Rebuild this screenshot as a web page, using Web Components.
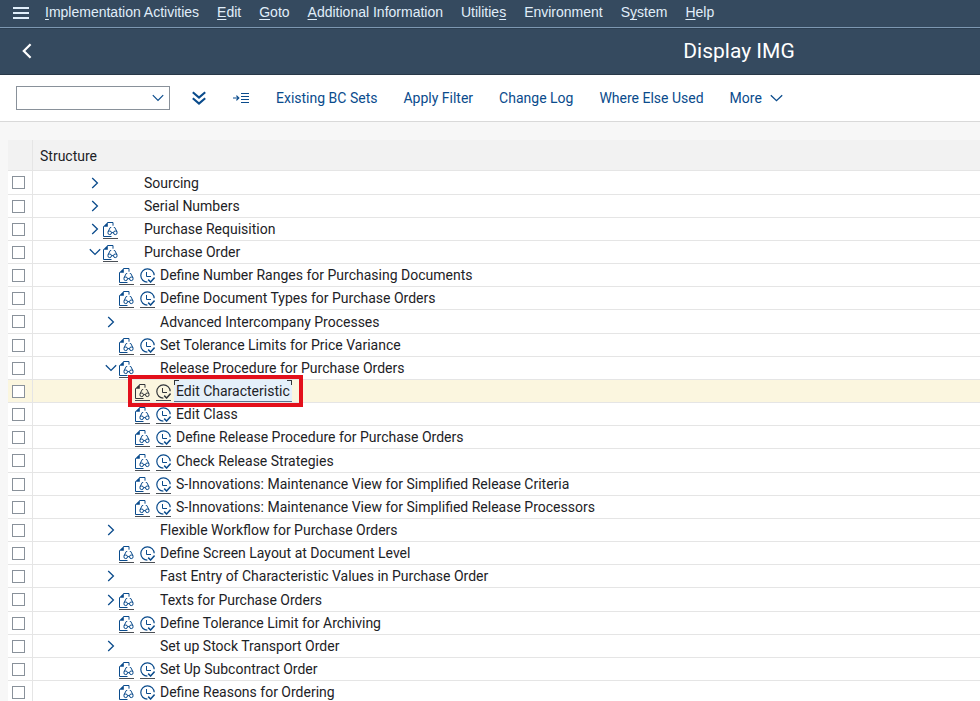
<!DOCTYPE html>
<html lang="en">
<head>
<meta charset="utf-8">
<meta name="viewport" content="width=device-width, initial-scale=1">
<title>Display IMG</title>
<style>
  body {
    margin: 0;
    height: 100vh;
    display: flex;
    flex-direction: column;
    overflow: hidden;
    background: #f7f7f7;
    color: #32363a;
    font: 14px/16px Roboto, "Liberation Sans", Arial, sans-serif;
    --shell: #354a5f;
    --link: #0a4b8c;
  }
</style>
</head>
<body>
  <menu-bar>
    <menu-entry><u>I</u>mplementation Activities</menu-entry>
    <menu-entry><u>E</u>dit</menu-entry>
    <menu-entry><u>G</u>oto</menu-entry>
    <menu-entry><u>A</u>dditional Information</menu-entry>
    <menu-entry>Utilitie<u>s</u></menu-entry>
    <menu-entry>Environment</menu-entry>
    <menu-entry>S<u>y</u>stem</menu-entry>
    <menu-entry><u>H</u>elp</menu-entry>
  </menu-bar>
  <title-bar>Display IMG</title-bar>
  <tool-bar>
    <tool-button label="Expand all"><app-icon name="expand-all"></app-icon></tool-button>
    <tool-button label="Position"><app-icon name="position"></app-icon></tool-button>
    <tool-button>Existing BC Sets</tool-button>
    <tool-button>Apply Filter</tool-button>
    <tool-button>Change Log</tool-button>
    <tool-button>Where Else Used</tool-button>
    <tool-button>More <app-icon name="more"></app-icon></tool-button>
  </tool-bar>
  <img-tree></img-tree>

<script>
const ICONS = {
  menu: [16, 12, `<path d="M0 1h16M0 6h16M0 11h16" stroke-width="2"/>`],
  back: [10, 16, `<path d="M8.6 1.2L1.8 8l6.8 6.8" stroke-width="2.2"/>`],
  down: [12, 8, `<path d="M.8 1.2L6 6.4l5.2-5.2" stroke-width="1.2"/>`],
  more: [13, 8, `<path d="M.8 1.2l5.7 5.4 5.7-5.4" stroke-width="1.3"/>`],
  "expand-all": [14, 14, `<path d="M.8 1.2L7 6.6l6.2-5.4M.8 7.2L7 12.6l6.2-5.4" stroke-width="2.1"/>`],
  position: [16, 12, `<path d="M0 6h5.6M3.4 3.6L5.8 6 3.4 8.4M8 1.5h8M8 4.5h8M8 7.5h8M8 10.5h8" stroke-width="1.2"/>`],
  closed: [8, 12, `<path d="M1.2 1l5.2 5-5.2 5" stroke-width="1.3"/>`],
  open: [12, 8, `<path d="M.8 1.2L6 6.4l5.2-5.2" stroke-width="1.3"/>`],
  doc: [15, 15, `
    <path d="M.5 4.5V14.5h8M4.5.5h5.5v3.2" stroke-width="1"/>
    <path d="M0 4.8L4.8 0v4.8z" fill="currentColor" stroke="none"/>
    <path d="M5 9.8l2.2-4.3h1M14 9.8l-2.2-4.3h-1M8.6 10.6h1.8" stroke-width="1"/>
    <circle cx="6.7" cy="10.8" r="1.8" stroke-width="1"/>
    <circle cx="12.3" cy="10.8" r="1.8" stroke-width="1"/>`],
  activity: [15, 15, `
    <path d="M14.2 7.2A6.7 6.7 0 1 0 7.4 14.2" stroke-width="1.2"/>
    <path d="M6.5 4v4.5h4.5" stroke-width="1"/>
    <path d="M8.2 11.6l2.4 2.4 4-4.4" stroke-width="1.5"/>`]
};

class AppIcon extends HTMLElement {
  constructor() {
    super();
    this.attachShadow({ mode: "open" });
  }

  connectedCallback() {
    const [w, h, shapes] = ICONS[this.getAttribute("name")];
    this.shadowRoot.innerHTML = `
      <style>
        :host { display: block; }
        svg { display: block; }
      </style>
      <svg width="${w}" height="${h}" viewBox="0 0 ${w} ${h}" fill="none"
        stroke="currentColor" aria-hidden="true">${shapes}</svg>
    `;
  }
}

class MenuBar extends HTMLElement {
  constructor() {
    super();
    this.attachShadow({ mode: "open" });
  }

  connectedCallback() {
    this.shadowRoot.innerHTML = `
      <style>
        :host {
          display: block;
          flex: none;
          background: var(--shell);
          border-bottom: 1px solid #7d97b1;
          color: #e0eefa;
          font-family: "Liberation Sans", Arial, sans-serif;
        }
        nav {
          display: flex;
          align-items: center;
          gap: 18px;
          height: 27px;
          box-sizing: border-box;
          padding: 0 13px 3px;
        }
        .menu {
          margin-right: -2px;
          padding: 1px 0 0;
          border: 0;
          background: none;
          color: inherit;
        }
      </style>
      <nav aria-label="Menu">
        <button class="menu" aria-label="Open menu"><app-icon name="menu"></app-icon></button>
        <slot></slot>
      </nav>
    `;
  }
}

class MenuEntry extends HTMLElement {
  constructor() {
    super();
    this.attachShadow({ mode: "open" });
  }

  connectedCallback() {
    this.shadowRoot.innerHTML = `
      <style>
        :host { display: block; }
        button {
          display: block;
          padding: 0;
          border: 0;
          background: none;
          color: inherit;
          font: inherit;
          white-space: nowrap;
        }
        ::slotted(u) {
          text-underline-offset: 2px;
          text-decoration-skip-ink: none;
        }
      </style>
      <button><slot></slot></button>
    `;
  }
}

class TitleBar extends HTMLElement {
  constructor() {
    super();
    this.attachShadow({ mode: "open" });
  }

  connectedCallback() {
    this.shadowRoot.innerHTML = `
      <style>
        :host {
          display: grid;
          grid-template-columns: 1fr 1fr;
          align-items: center;
          flex: none;
          height: 47px;
          box-sizing: border-box;
          padding: 0 2px 2px 22px;
          border-top: 1px solid #2c3f52;
          border-bottom: 1px solid #283848;
          background: var(--shell);
          color: #fff;
        }
        button {
          justify-self: start;
          padding: 0;
          border: 0;
          background: none;
          color: inherit;
        }
        h1 {
          margin: 0;
          font-size: 21px;
          line-height: 24px;
          font-weight: normal;
          text-align: center;
        }
      </style>
      <button aria-label="Back"><app-icon name="back"></app-icon></button>
      <h1><slot></slot></h1>
    `;
  }
}

class ToolBar extends HTMLElement {
  constructor() {
    super();
    this.attachShadow({ mode: "open" });
  }

  connectedCallback() {
    this.shadowRoot.innerHTML = `
      <style>
        :host {
          display: flex;
          align-items: center;
          flex: none;
          height: 47px;
          box-sizing: border-box;
          padding: 0 16px 1px;
          border-bottom: 1px solid #d9d9d9;
          background: #fff;
          color: var(--link);
        }
        .field {
          display: grid;
          align-items: center;
          margin-right: 9px;
        }
        .field > * { grid-area: 1 / 1; }
        select {
          appearance: none;
          width: 154px;
          height: 24px;
          border: 1px solid #89919a;
          border-radius: 0;
          background: #fff;
          font: inherit;
        }
        .field app-icon {
          justify-self: end;
          margin-right: 6px;
          pointer-events: none;
        }
      </style>
      <div class="field">
        <select aria-label="Command"><option></option></select>
        <app-icon name="down"></app-icon>
      </div>
      <slot></slot>
    `;
  }
}

class ToolButton extends HTMLElement {
  constructor() {
    super();
    this.attachShadow({ mode: "open" });
  }

  connectedCallback() {
    this.shadowRoot.innerHTML = `
      <style>
        :host { display: block; }
        :host([label]) { margin-right: 1px; }
        button {
          display: flex;
          align-items: center;
          gap: 8px;
          padding: 1px 13px 0;
          border: 0;
          background: none;
          color: inherit;
          font: inherit;
          white-space: nowrap;
        }
      </style>
      <button><slot></slot></button>
    `;
    const label = this.getAttribute("label");
    if (label) {
      this.shadowRoot.querySelector("button").setAttribute("aria-label", label);
    }
  }
}

// level, state of the node (closed, open, leaf), has documentation, text
const NODES = [
  [0, "closed", false, "Sourcing"],
  [0, "closed", false, "Serial Numbers"],
  [0, "closed", true, "Purchase Requisition"],
  [0, "open", true, "Purchase Order"],
  [1, "leaf", true, "Define Number Ranges for Purchasing Documents"],
  [1, "leaf", true, "Define Document Types for Purchase Orders"],
  [1, "closed", false, "Advanced Intercompany Processes"],
  [1, "leaf", true, "Set Tolerance Limits for Price Variance"],
  [1, "open", true, "Release Procedure for Purchase Orders"],
  [2, "leaf", true, "Edit Characteristic"],
  [2, "leaf", true, "Edit Class"],
  [2, "leaf", true, "Define Release Procedure for Purchase Orders"],
  [2, "leaf", true, "Check Release Strategies"],
  [2, "leaf", true, "S-Innovations: Maintenance View for Simplified Release Criteria"],
  [2, "leaf", true, "S-Innovations: Maintenance View for Simplified Release Processors"],
  [1, "closed", false, "Flexible Workflow for Purchase Orders"],
  [1, "leaf", true, "Define Screen Layout at Document Level"],
  [1, "closed", false, "Fast Entry of Characteristic Values in Purchase Order"],
  [1, "closed", true, "Texts for Purchase Orders"],
  [1, "leaf", true, "Define Tolerance Limit for Archiving"],
  [1, "closed", false, "Set up Stock Transport Order"],
  [1, "leaf", true, "Set Up Subcontract Order"],
  [1, "leaf", true, "Define Reasons for Ordering"]
];
const SELECTED = 9;

class ImgTree extends HTMLElement {
  constructor() {
    super();
    this.attachShadow({ mode: "open" });
  }

  connectedCallback() {
    this.shadowRoot.innerHTML = `
      <style>
        :host {
          display: block;
          flex: 1;
          min-height: 0;
          padding: 18px 0 0 8px;
          overflow: hidden;
        }
        table {
          width: 100%;
          table-layout: fixed;
          border-collapse: separate;
          border-spacing: 0;
          background: #fff;
          color: #1d2226;
        }
        th, td {
          box-sizing: border-box;
          padding: 0;
          border-bottom: 1px solid #e5e5e5;
        }
        th {
          height: 31px;
          padding: 1px 0 0 7px;
          background: #f2f2f2;
          font-weight: normal;
          text-align: left;
        }
        td { height: 23px; }
        tr:nth-child(6n + 1) td { height: 24px; }
        .mark {
          width: 25px;
          padding-left: 4px;
          border-right: 1px solid #e5e5e5;
        }
        input {
          appearance: none;
          display: block;
          width: 13px;
          height: 13px;
          margin: 0;
          border: 1px solid #89919a;
          background: #fff;
        }
        .node {
          position: relative;
          display: flex;
          align-items: center;
          height: 22px;
          padding-left: calc(54px + 16px * var(--level));
          color: var(--link);
        }
        .slot {
          display: flex;
          width: 16px;
        }
        .expander { justify-content: center; }
        .activity { margin: 0 4px 0 5px; }
        button {
          display: block;
          padding: 0;
          border: 0;
          background: none;
          color: inherit;
        }
        .slot .tool {
          padding-bottom: 1px;
          border-bottom: 1px solid #4a4f55;
        }
        .slot:has(.tool) { padding-top: 3px; }
        .text {
          color: #1d2226;
          white-space: nowrap;
        }
        .selected td { background: #fbf6df; }
        .selected .node { color: #32363a; }
        .selected .text {
          position: relative;
          margin: 0 -2px;
          padding: 3px 2px 2px;
          background: #e5f0fa;
          border-bottom: 1px solid #5c7690;
        }
        .selected .text::before, .selected .text::after {
          content: "";
          position: absolute;
          top: 0;
          width: 4px;
          height: 4px;
          border-top: 1px solid #32363a;
        }
        .selected .text::before { left: 0; border-left: 1px solid #32363a; }
        .selected .text::after { right: 0; border-right: 1px solid #32363a; }
        /* red frame over the picked activity */
        .frame {
          position: absolute;
          left: 95px;
          width: 175px;
          top: -5px;
          bottom: -5px;
          box-sizing: border-box;
          border: 4px solid #e3101b;
          pointer-events: none;
        }
      </style>
      <table>
        <thead>
          <tr><th class="mark"></th><th scope="col">Structure</th></tr>
        </thead>
        <tbody>${NODES.map((node, i) => this.row(node, i)).join("")}</tbody>
      </table>
    `;
  }

  row([level, state, doc, text], i) {
    const selected = i === SELECTED;
    const expander = state === "leaf" ? "" :
      `<button aria-label="Toggle ${text}"><app-icon name="${state}"></app-icon></button>`;
    const docButton = doc ?
      `<button class="tool" aria-label="Documentation"><app-icon name="doc"></app-icon></button>` : "";
    const activity = state === "leaf" ?
      `<button class="tool" aria-label="Execute"><app-icon name="activity"></app-icon></button>` : "";
    return `
      <tr${selected ? ' class="selected"' : ""}>
        <td class="mark"><input type="checkbox" aria-labelledby="node-${i}"></td>
        <td>
          <div class="node" style="--level: ${level}">
            <span class="slot expander">${expander}</span>
            <span class="slot">${docButton}</span>
            <span class="slot activity">${activity}</span>
            <span class="text" id="node-${i}">${text}</span>
            ${selected ? '<span class="frame"></span>' : ""}
          </div>
        </td>
      </tr>`;
  }
}

customElements.define("app-icon", AppIcon);
customElements.define("menu-bar", MenuBar);
customElements.define("menu-entry", MenuEntry);
customElements.define("title-bar", TitleBar);
customElements.define("tool-bar", ToolBar);
customElements.define("tool-button", ToolButton);
customElements.define("img-tree", ImgTree);
</script>
</body>
</html>
